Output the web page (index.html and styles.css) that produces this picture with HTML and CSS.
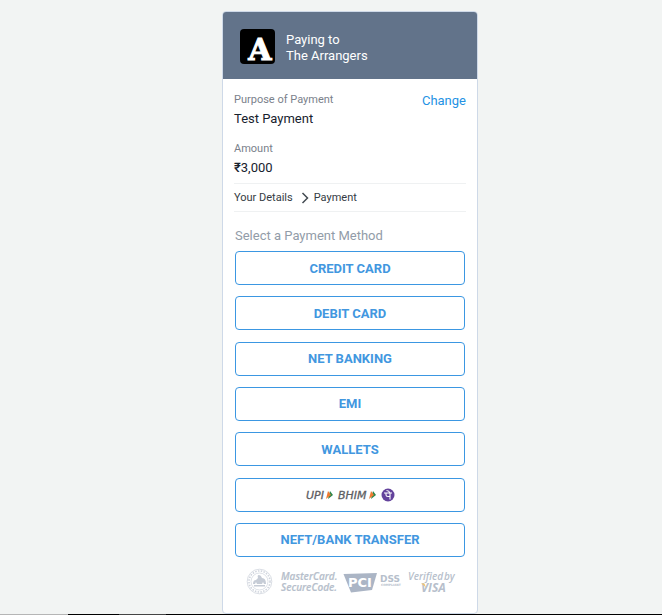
FILE: index.html
```html
<!DOCTYPE html>
<html lang="en">
<head>
<meta charset="utf-8">
<meta name="viewport" content="width=device-width, initial-scale=1">
<title>Payment</title>
<link rel="stylesheet" href="styles.css">
</head>
<body>
<main class="card">
  <header class="payee">
    <svg class="payee-logo" viewBox="0 0 35 35" aria-hidden="true">
      <rect width="35" height="35" rx="4" fill="#000"/>
      <text class="logo-letter" x="20" y="31" text-anchor="middle">A</text>
    </svg>
    <p class="payee-name">Paying to<br>The Arrangers</p>
  </header>
  <div class="content">
    <section class="summary">
      <dl class="facts">
        <div class="fact"><dt>Purpose of Payment</dt><dd>Test Payment</dd></div>
        <div class="fact"><dt>Amount</dt><dd><span class="rupee">₹</span>3,000</dd></div>
      </dl>
      <a class="change" href="#">Change</a>
    </section>
    <nav class="steps" aria-label="Progress">
      <span>Your Details</span>
      <svg class="chevron" viewBox="0 0 8 12" aria-hidden="true"><path d="M1.5 1 6.5 6 1.5 11" fill="none" stroke="#444b52" stroke-width="1.5"/></svg>
      <span>Payment</span>
    </nav>
    <section class="methods">
      <h1 class="methods-title">Select a Payment Method</h1>
      <div class="method-list">
        <button class="method" type="button">CREDIT CARD</button>
        <button class="method" type="button">DEBIT CARD</button>
        <button class="method" type="button">NET BANKING</button>
        <button class="method" type="button">EMI</button>
        <button class="method" type="button">WALLETS</button>
        <button class="method" type="button" aria-label="UPI, BHIM or PhonePe">
          <svg class="upi" viewBox="0 0 92 16">
            <g class="upi-text"><text x="2" y="12">UPI</text><text x="34" y="12">BHIM</text></g>
            <path d="M26 4 29 8 24 12Z" fill="#29864a"/><path d="M24 4 27 8 22 12Z" fill="#ee7b32"/>
            <path d="M69 4 72 8 67 12Z" fill="#29864a"/><path d="M67 4 70 8 65 12Z" fill="#ee7b32"/>
            <circle cx="84" cy="8" r="6.5" fill="#63429c"/>
            <path d="M80 6H88M82 6V8Q82 9.500 84 9.500H86M86 6V12.500M86 6Q85 3.500 82.500 3.500" fill="none" stroke="#fff" stroke-width="1.100"/>
          </svg>
        </button>
        <button class="method" type="button">NEFT/BANK TRANSFER</button>
      </div>
    </section>
    <footer class="trust">
      <svg class="seals" viewBox="0 0 208 26" role="img" aria-label="Security certifications">
        <g fill="none" stroke="#cfd4dd">
          <circle cx="13.500" cy="12.500" r="12.300" stroke-width=".8"/>
          <circle cx="13.500" cy="12.500" r="10.500" stroke-width="1.500" stroke-dasharray="1.500 1.300"/>
          <circle cx="13.500" cy="12.500" r="8.500" stroke-width=".7"/>
        </g>
        <path d="M7 15Q7 11 10 11L12 9Q11 6 13 6T16 9Q20 9 20 15L18 15 17 13 16 15H11L10 13 9 15ZM8 16H19V17.500H8Z" fill="#c6ccd6"/>
        <g class="seal-text">
          <text class="mastercard" x="35" y="11">MasterCard.</text>
          <text class="mastercard" x="35" y="22">SecureCode.</text>
          <path d="M97.500 5 131 4 126 21 105 23.500Z" fill="#abb5c5"/>
          <text class="pci" x="102" y="18">PCI</text>
          <text class="dss" x="134" y="13">DSS</text>
          <text class="compliant" x="135" y="17">COMPLIANT</text>
          <text class="verified" x="162" y="11">Verified</text>
          <text class="verified" x="198" y="11">by</text>
          <text class="visa" x="175" y="23">VISA</text>
          <path d="M175 14.500H178.500L180 19Q178.500 16 175 14.500Z" fill="#f3c56b"/>
        </g>
      </svg>
    </footer>
  </div>
</main>
<div class="window-edge"></div>
</body>
</html>
```
FILE: styles.css
```css
* { box-sizing: border-box; }

body {
  margin: 0;
  min-height: 100vh;
  display: flex;
  flex-direction: column;
  align-items: center;
  padding: 11px 0 0 38px;
  background: #f2f4f3;
  font: 13px/16px Roboto, "Liberation Sans", sans-serif;
  color: #17222e;
}

p, dl, dd, h1 { margin: 0; }

.card {
  width: 100%;
  max-width: 256px;
  background: #fff;
  border: 1px solid #ced9e8;
  border-radius: 4px;
}

.payee {
  display: flex;
  align-items: flex-end;
  gap: 11px;
  padding: 17px 17px 15px;
  background: #62738a;
  border-radius: 3px 3px 0 0;
}
.payee-logo { width: 35px; height: 35px; flex: none; overflow: visible; }
.logo-letter {
  font: bold 30px "DejaVu Serif", serif;
  fill: #fff;
  stroke: #fff;
  stroke-width: 1px;
}
.payee-name { color: #fff; }

.content { padding: 13px 11px 11px; }

.summary { display: flex; justify-content: space-between; }
.facts { display: grid; gap: 14px; }
.fact { display: grid; gap: 3px; }
dt { font-size: 11px; color: #7a818b; }
.rupee { font-weight: 500; }
.change { color: #2492e4; text-decoration: none; padding-top: 1px; }

.steps {
  display: flex;
  align-items: center;
  gap: 8px;
  margin-top: 7px;
  padding: 6px 0 5px;
  border-top: 1px solid #eff1f2;
  border-bottom: 1px solid #eff1f2;
  font-size: 11px;
  color: #343b43;
}
.chevron { width: 8px; height: 12px; }
.steps span:last-child { margin-left: -3px; }

.methods { padding: 16px 1px 0; }
.methods-title {
  font-size: 13px;
  line-height: 16px;
  font-weight: 400;
  color: #929ca8;
}
.method-list {
  display: grid;
  align-content: space-between;
  min-height: 306px;
  margin-top: 7px;
}
.method {
  display: flex;
  align-items: center;
  justify-content: center;
  height: 34px;
  padding: 1px 0 0;
  border: 1px solid #3b97e2;
  border-radius: 4px;
  background: #fff;
  color: #4297df;
  font: bold 13px/16px Roboto, "Liberation Sans", sans-serif;
  cursor: pointer;
}

.upi { width: 92px; height: 16px; }
.upi-text {
  font: italic 11px "DejaVu Sans", sans-serif;
  fill: #5d5e62;
  stroke: #5d5e62;
  stroke-width: .3px;
}

.trust { padding: 12px 12px 7px; }
.seals { display: block; width: 208px; height: 26px; overflow: visible; }
.seal-text { fill: #b7bfcc; }
.mastercard { font: italic 600 10px "Open Sans", sans-serif; stroke: #b7bfcc; stroke-width: .2px; }
.pci { font: bold 13px "DejaVu Sans", sans-serif; fill: #fff; }
.dss { font: bold 9px "DejaVu Sans", sans-serif; }
.compliant { font: bold 3px "DejaVu Sans", sans-serif; }
.verified { font: italic 600 10px "Open Sans", sans-serif; }
.visa { font: italic bold 12px "Open Sans", sans-serif; }

.window-edge {
  align-self: stretch;
  height: 1px;
  margin: auto 0 0 -38px;
  background: linear-gradient(to right, #b5b5b5 68px, #000 68px 119px, #444 119px 166px, #000 166px);
}
```
